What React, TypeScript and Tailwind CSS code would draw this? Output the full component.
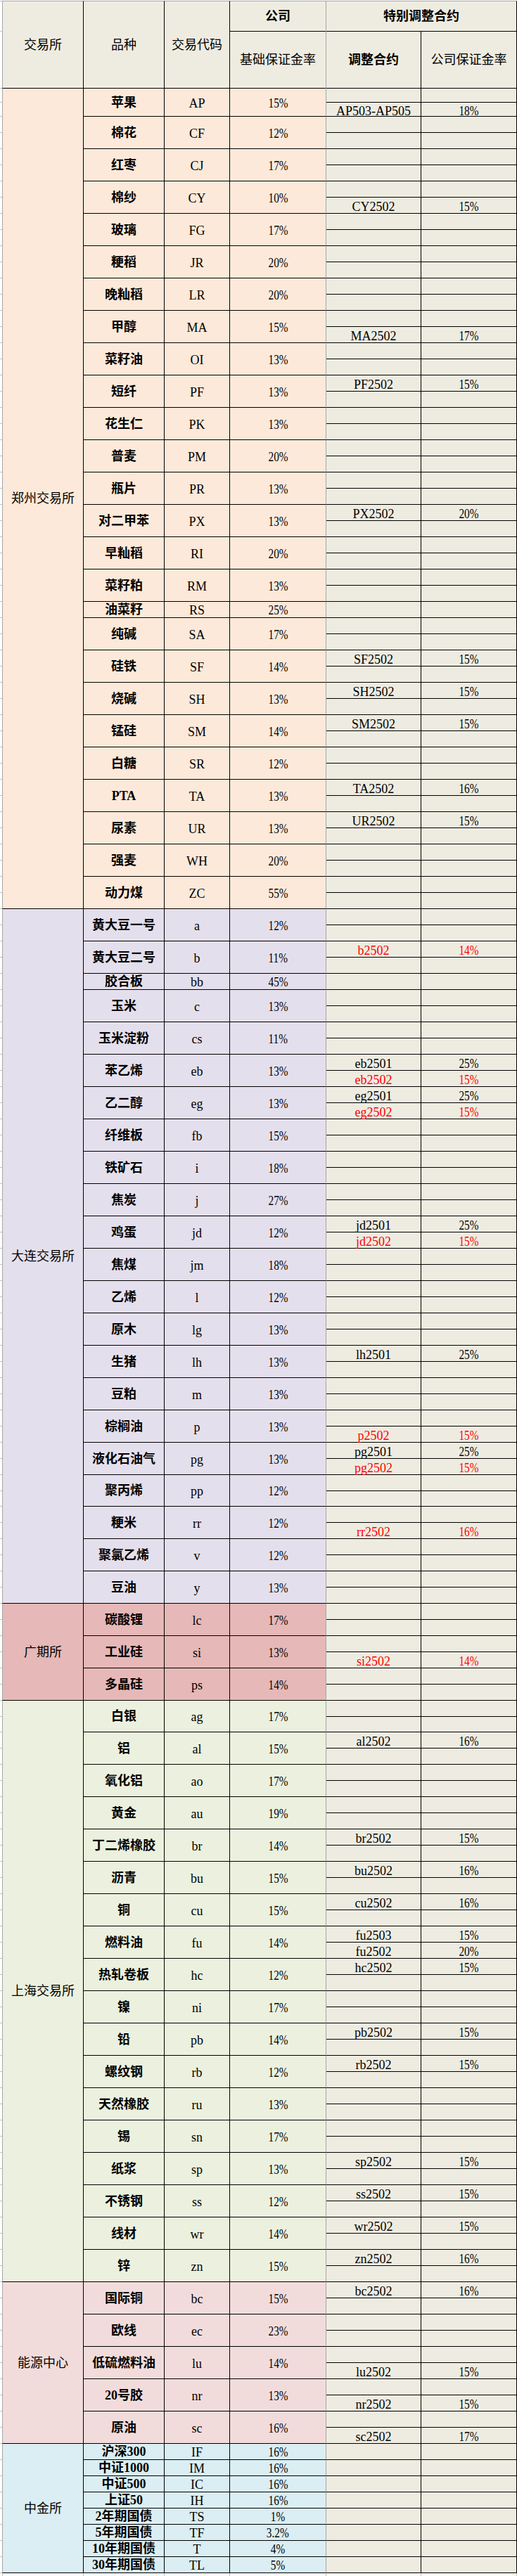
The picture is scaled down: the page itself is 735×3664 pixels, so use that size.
import React from 'react';

type Sp = [number, string, string, boolean?];
type P = { n: string; c: string; r: string; h?: number[]; s?: Sp[] };
type G = { name: string; bg: string; items: P[] };

const HC: Record<number, string> = {
  20: 'h-[20px]',
  22: 'h-[22px]',
  23: 'h-[23px]',
};

const groups: G[] = [
  {
    name: '郑州交易所',
    bg: 'bg-[#FDE9D9]',
    items: [
      { n: '苹果', c: 'AP', r: '15%', h: [20, 20], s: [[1, 'AP503-AP505', '18%']] },
      { n: '棉花', c: 'CF', r: '12%' },
      { n: '红枣', c: 'CJ', r: '17%' },
      { n: '棉纱', c: 'CY', r: '10%', s: [[1, 'CY2502', '15%']] },
      { n: '玻璃', c: 'FG', r: '17%' },
      { n: '粳稻', c: 'JR', r: '20%' },
      { n: '晚籼稻', c: 'LR', r: '20%' },
      { n: '甲醇', c: 'MA', r: '15%', s: [[1, 'MA2502', '17%']] },
      { n: '菜籽油', c: 'OI', r: '13%' },
      { n: '短纤', c: 'PF', r: '13%', s: [[0, 'PF2502', '15%']] },
      { n: '花生仁', c: 'PK', r: '13%' },
      { n: '普麦', c: 'PM', r: '20%' },
      { n: '瓶片', c: 'PR', r: '13%' },
      { n: '对二甲苯', c: 'PX', r: '13%', s: [[0, 'PX2502', '20%']] },
      { n: '早籼稻', c: 'RI', r: '20%' },
      { n: '菜籽粕', c: 'RM', r: '13%' },
      { n: '油菜籽', c: 'RS', r: '25%', h: [23] },
      { n: '纯碱', c: 'SA', r: '17%' },
      { n: '硅铁', c: 'SF', r: '14%', s: [[0, 'SF2502', '15%']] },
      { n: '烧碱', c: 'SH', r: '13%', s: [[0, 'SH2502', '15%']] },
      { n: '锰硅', c: 'SM', r: '14%', s: [[0, 'SM2502', '15%']] },
      { n: '白糖', c: 'SR', r: '12%' },
      { n: 'PTA', c: 'TA', r: '13%', s: [[0, 'TA2502', '16%']] },
      { n: '尿素', c: 'UR', r: '13%', s: [[0, 'UR2502', '15%']] },
      { n: '强麦', c: 'WH', r: '20%' },
      { n: '动力煤', c: 'ZC', r: '55%' },
    ],
  },
  {
    name: '大连交易所',
    bg: 'bg-[#E4DFEC]',
    items: [
      { n: '黄大豆一号', c: 'a', r: '12%' },
      { n: '黄大豆二号', c: 'b', r: '11%', s: [[0, 'b2502', '14%', true]] },
      { n: '胶合板', c: 'bb', r: '45%', h: [23] },
      { n: '玉米', c: 'c', r: '13%' },
      { n: '玉米淀粉', c: 'cs', r: '11%' },
      { n: '苯乙烯', c: 'eb', r: '13%', s: [[0, 'eb2501', '25%'], [1, 'eb2502', '15%', true]] },
      { n: '乙二醇', c: 'eg', r: '13%', s: [[0, 'eg2501', '25%'], [1, 'eg2502', '15%', true]] },
      { n: '纤维板', c: 'fb', r: '15%' },
      { n: '铁矿石', c: 'i', r: '18%' },
      { n: '焦炭', c: 'j', r: '27%' },
      { n: '鸡蛋', c: 'jd', r: '12%', s: [[0, 'jd2501', '25%'], [1, 'jd2502', '15%', true]] },
      { n: '焦煤', c: 'jm', r: '18%' },
      { n: '乙烯', c: 'l', r: '12%' },
      { n: '原木', c: 'lg', r: '13%' },
      { n: '生猪', c: 'lh', r: '13%', s: [[0, 'lh2501', '25%']] },
      { n: '豆粕', c: 'm', r: '13%' },
      { n: '棕榈油', c: 'p', r: '13%', s: [[1, 'p2502', '15%', true]] },
      { n: '液化石油气', c: 'pg', r: '13%', s: [[0, 'pg2501', '25%'], [1, 'pg2502', '15%', true]] },
      { n: '聚丙烯', c: 'pp', r: '12%', h: [23, 22] },
      { n: '粳米', c: 'rr', r: '12%', s: [[1, 'rr2502', '16%', true]] },
      { n: '聚氯乙烯', c: 'v', r: '12%' },
      { n: '豆油', c: 'y', r: '13%' },
    ],
  },
  {
    name: '广期所',
    bg: 'bg-[#E6B8B7]',
    items: [
      { n: '碳酸锂', c: 'lc', r: '17%' },
      { n: '工业硅', c: 'si', r: '13%', s: [[1, 'si2502', '14%', true]] },
      { n: '多晶硅', c: 'ps', r: '14%' },
    ],
  },
  {
    name: '上海交易所',
    bg: 'bg-[#EBF1DE]',
    items: [
      { n: '白银', c: 'ag', r: '17%', h: [23, 22] },
      { n: '铝', c: 'al', r: '15%', s: [[0, 'al2502', '16%']] },
      { n: '氧化铝', c: 'ao', r: '17%' },
      { n: '黄金', c: 'au', r: '19%' },
      { n: '丁二烯橡胶', c: 'br', r: '14%', s: [[0, 'br2502', '15%']] },
      { n: '沥青', c: 'bu', r: '15%', s: [[0, 'bu2502', '16%']] },
      { n: '铜', c: 'cu', r: '15%', s: [[0, 'cu2502', '16%']] },
      { n: '燃料油', c: 'fu', r: '14%', s: [[0, 'fu2503', '15%'], [1, 'fu2502', '20%']] },
      { n: '热轧卷板', c: 'hc', r: '12%', s: [[0, 'hc2502', '15%']] },
      { n: '镍', c: 'ni', r: '17%' },
      { n: '铅', c: 'pb', r: '14%', s: [[0, 'pb2502', '15%']] },
      { n: '螺纹钢', c: 'rb', r: '12%', s: [[0, 'rb2502', '15%']] },
      { n: '天然橡胶', c: 'ru', r: '13%' },
      { n: '锡', c: 'sn', r: '17%' },
      { n: '纸浆', c: 'sp', r: '13%', s: [[0, 'sp2502', '15%']] },
      { n: '不锈钢', c: 'ss', r: '12%', s: [[0, 'ss2502', '15%']] },
      { n: '线材', c: 'wr', r: '14%', s: [[0, 'wr2502', '15%']] },
      { n: '锌', c: 'zn', r: '15%', s: [[0, 'zn2502', '16%']] },
    ],
  },
  {
    name: '能源中心',
    bg: 'bg-[#F2DCDB]',
    items: [
      { n: '国际铜', c: 'bc', r: '15%', s: [[0, 'bc2502', '16%']] },
      { n: '欧线', c: 'ec', r: '23%' },
      { n: '低硫燃料油', c: 'lu', r: '14%', s: [[1, 'lu2502', '15%']] },
      { n: '20号胶', c: 'nr', r: '13%', s: [[1, 'nr2502', '15%']] },
      { n: '原油', c: 'sc', r: '16%', s: [[1, 'sc2502', '17%']] },
    ],
  },
  {
    name: '中金所',
    bg: 'bg-[#DAEEF3]',
    items: [
      { n: '沪深300', c: 'IF', r: '16%', h: [23] },
      { n: '中证1000', c: 'IM', r: '16%', h: [23] },
      { n: '中证500', c: 'IC', r: '16%', h: [23] },
      { n: '上证50', c: 'IH', r: '16%', h: [23] },
      { n: '2年期国债', c: 'TS', r: '1%', h: [23] },
      { n: '5年期国债', c: 'TF', r: '3.2%', h: [23] },
      { n: '10年期国债', c: 'T', r: '4%', h: [23] },
      { n: '30年期国债', c: 'TL', r: '5%', h: [23] },
    ],
  },
];

const heightsOf = (p: P) => p.h ?? [23, 23];

function Gutter({ hs }: { hs: number[] }) {
  return (
    <div className="w-[3px] shrink-0 flex flex-col">
      {hs.map((h, i) => (
        <div key={i} className={`${HC[h]} border-b border-[#c4c4c4]`} />
      ))}
    </div>
  );
}

function Rate({ v }: { v: string }) {
  return <span className="inline-block scale-x-[0.85]">{v}</span>;
}

function ProductRow({ p, bg }: { p: P; bg: string }) {
  const hs = heightsOf(p);
  return (
    <div className="flex">
      <div className={`w-[115px] shrink-0 border-r border-b border-black ${bg} flex items-center justify-center font-bold`}>
        {p.n}
      </div>
      <div className={`w-[93px] shrink-0 border-r border-b border-black ${bg} flex items-center justify-center pt-[2px]`}>
        {p.c}
      </div>
      <div className={`w-[137px] shrink-0 border-r border-b border-black border-r-[#a6a6a6] ${bg} flex items-center justify-center pt-[2px]`}>
        <Rate v={p.r} />
      </div>
      <div className="w-[271px] shrink-0 flex flex-col">
        {hs.map((h, i) => {
          const sp = p.s?.find((x) => x[0] === i);
          const color = sp && sp[3] ? 'text-[#ff0000]' : 'text-black';
          return (
            <div key={i} className={`${HC[h]} flex border-b border-black bg-[#EEECE1] ${color}`}>
              <div className="w-[135px] shrink-0 border-r border-black flex items-center justify-center pt-[4px]">
                {sp ? sp[1] : ''}
              </div>
              <div className="w-[136px] shrink-0 border-r border-black flex items-center justify-center pt-[4px]">
                {sp ? <Rate v={sp[2]} /> : ''}
              </div>
            </div>
          );
        })}
      </div>
    </div>
  );
}

function Group({ g }: { g: G }) {
  const hs = g.items.flatMap(heightsOf);
  return (
    <div className="flex">
      <Gutter hs={hs} />
      <div className={`w-[116px] shrink-0 border-l border-r border-b border-black border-l-[#a6a6a6] ${g.bg} flex items-center justify-center`}>
        {g.name}
      </div>
      <div className="w-[616px] shrink-0 flex flex-col">
        {g.items.map((p, i) => (
          <ProductRow key={i} p={p} bg={g.bg} />
        ))}
      </div>
    </div>
  );
}

function Header() {
  return (
    <div className="flex h-[125px]">
      <div className="w-[3px] shrink-0 flex flex-col">
        <div className="h-[44px] border-t border-b border-[#c4c4c4]" />
        <div className="h-[81px] border-b border-[#c4c4c4]" />
      </div>
      <div className="w-[116px] shrink-0 bg-[#EEECE1] border-l border-t border-r border-b border-black border-l-[#a6a6a6] border-t-[#a6a6a6] flex items-center justify-center">
        交易所
      </div>
      <div className="w-[115px] shrink-0 bg-[#EEECE1] border-t border-r border-b border-black border-t-[#a6a6a6] flex items-center justify-center">
        品种
      </div>
      <div className="w-[93px] shrink-0 bg-[#EEECE1] border-t border-r border-b border-black border-t-[#a6a6a6] flex items-center justify-center">
        交易代码
      </div>
      <div className="w-[137px] shrink-0 bg-[#EEECE1] flex flex-col border-r border-[#a6a6a6]">
        <div className="h-[44px] border-t border-b border-black border-t-[#a6a6a6] flex items-center justify-center font-bold">
          公司
        </div>
        <div className="flex-1 border-b border-black flex items-center justify-center">基础保证金率</div>
      </div>
      <div className="w-[271px] shrink-0 bg-[#EEECE1] flex flex-col">
        <div className="h-[44px] border-t border-b border-r border-black border-t-[#a6a6a6] flex items-center justify-center font-bold">
          特别调整合约
        </div>
        <div className="flex flex-1">
          <div className="w-[135px] shrink-0 border-r border-b border-black flex items-center justify-center font-bold">
            调整合约
          </div>
          <div className="w-[136px] shrink-0 border-r border-b border-black flex items-center justify-center">
            公司保证金率
          </div>
        </div>
      </div>
    </div>
  );
}

export default function App() {
  return (
    <div className="w-[735px] bg-white text-black text-[18px] leading-none font-['Liberation_Serif','Noto_Sans_CJK_SC',serif]">
      <div className="h-[1px]" />
      <Header />
      {groups.map((g, i) => (
        <Group key={i} g={g} />
      ))}
      <div className="flex h-[4px]">
        <div className="w-[3px] shrink-0" />
        <div className="w-[116px] shrink-0 border-l border-r border-[#c4c4c4]" />
        <div className="w-[115px] shrink-0 border-r border-[#c4c4c4]" />
        <div className="w-[93px] shrink-0 border-r border-[#c4c4c4]" />
        <div className="w-[137px] shrink-0 border-r border-[#c4c4c4]" />
        <div className="w-[135px] shrink-0 border-r border-[#c4c4c4]" />
        <div className="w-[136px] shrink-0 border-r border-[#c4c4c4]" />
      </div>
    </div>
  );
}
